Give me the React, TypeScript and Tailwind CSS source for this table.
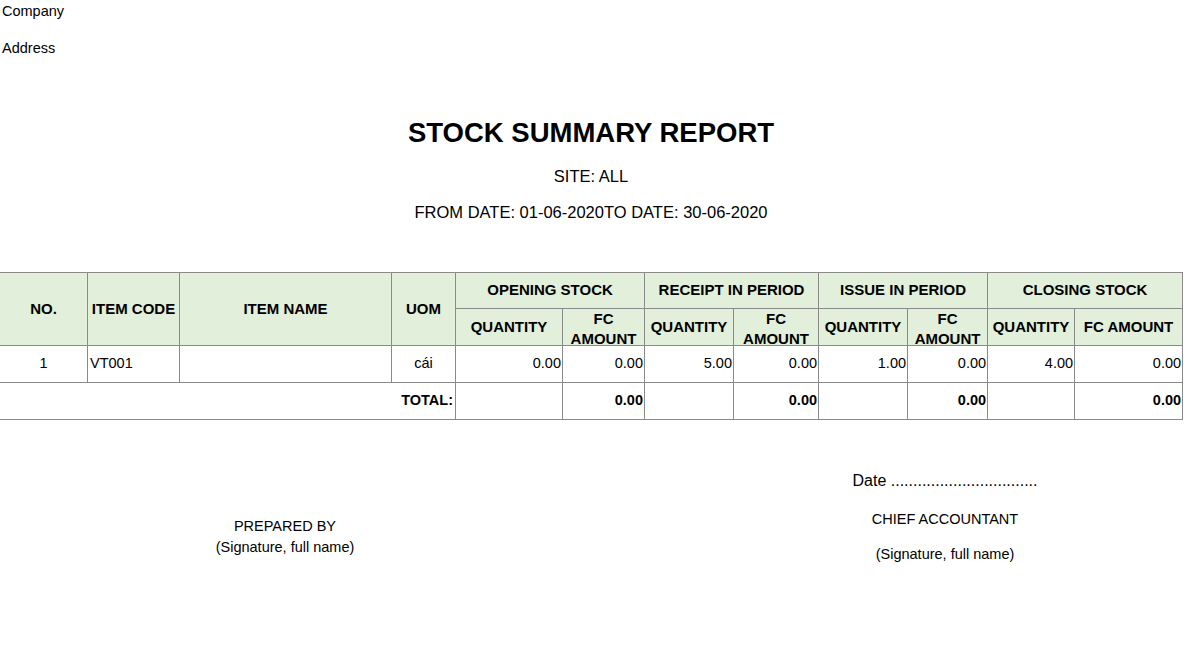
import React from 'react';

const cols = [88, 92, 212, 64, 107, 82, 89, 85, 89, 80, 87, 108];

const groups = ['OPENING STOCK', 'RECEIPT IN PERIOD', 'ISSUE IN PERIOD', 'CLOSING STOCK'];

const rows = [
  { no: '1', code: 'VT001', name: '', uom: 'cái', values: ['0.00', '0.00', '5.00', '0.00', '1.00', '0.00', '4.00', '0.00'] },
];

const totals = ['', '0.00', '', '0.00', '', '0.00', '', '0.00'];

const th = 'border border-[#8a8a8a] bg-[#e2efda] text-[15px] font-bold text-black text-center align-middle p-0';
const td = 'border border-[#8a8a8a] text-[14.5px] text-black align-middle p-0 h-[37px]';

const StockSummaryReport = () => {
  return (
    <div className="w-[1182px] bg-white text-black font-['Liberation_Sans',Arial,sans-serif]">
      <p className="pl-[2px] text-[14.5px] leading-[22px]">Company</p>
      <p className="pl-[2px] mt-[15px] text-[14.5px] leading-[22px]">Address</p>

      <h1 className="mt-[58px] text-center text-[27.5px] leading-[32px] font-bold">STOCK SUMMARY REPORT</h1>
      <p className="mt-[17px] text-center text-[16.5px] leading-[20px]">SITE: ALL</p>
      <p className="mt-[16px] text-center text-[16.5px] leading-[20px]">FROM DATE: 01-06-2020TO DATE: 30-06-2020</p>

      <table className="mt-[50px] -ml-[1px] w-[1184px] table-fixed border-collapse">
        <colgroup>
          {cols.map((w, i) => (
            <col key={i} style={{ width: w }} />
          ))}
        </colgroup>
        <thead>
          <tr className="h-[36px]">
            <th rowSpan={2} className={th}>NO.</th>
            <th rowSpan={2} className={th}>ITEM CODE</th>
            <th rowSpan={2} className={th}>ITEM NAME</th>
            <th rowSpan={2} className={th}>UOM</th>
            {groups.map((g) => (
              <th key={g} colSpan={2} className={th}>{g}</th>
            ))}
          </tr>
          <tr className="h-[37px]">
            {groups.map((g, i) => (
              <React.Fragment key={g}>
                <th className={th}>QUANTITY</th>
                {i < 3 ? (
                  <th className={`${th} align-top`}>
                    <div className="h-[36px] leading-[19.5px]">FC<br />AMOUNT</div>
                  </th>
                ) : (
                  <th className={th}>FC AMOUNT</th>
                )}
              </React.Fragment>
            ))}
          </tr>
        </thead>
        <tbody>
          {rows.map((r) => (
            <tr key={r.no}>
              <td className={`${td} text-center`}>{r.no}</td>
              <td className={`${td} pl-[2px]`}>{r.code}</td>
              <td className={td}>{r.name}</td>
              <td className={`${td} text-center`}>{r.uom}</td>
              {r.values.map((v, i) => (
                <td key={i} className={`${td} text-right pr-[1px]`}>{v}</td>
              ))}
            </tr>
          ))}
          <tr>
            <td colSpan={4} className={`${td} text-right font-bold pr-[2px]`}>TOTAL:</td>
            {totals.map((v, i) => (
              <td key={i} className={`${td} text-right font-bold pr-[1px]`}>{v}</td>
            ))}
          </tr>
        </tbody>
      </table>

      <div className="mt-[51px] flex items-start">
        <div className="w-[570px] pt-[45px] text-center text-[14.5px] leading-[21px]">
          <p>PREPARED BY</p>
          <p>(Signature, full name)</p>
        </div>
        <div className="ml-auto w-[474px] text-center">
          <p className="text-[16px] leading-[20px]">Date .................................</p>
          <p className="mt-[18px] text-[14.5px] leading-[20px]">CHIEF ACCOUNTANT</p>
          <p className="mt-[15px] text-[14.5px] leading-[20px]">(Signature, full name)</p>
        </div>
      </div>
    </div>
  );
};

export default function App() {
  return <StockSummaryReport />;
}
